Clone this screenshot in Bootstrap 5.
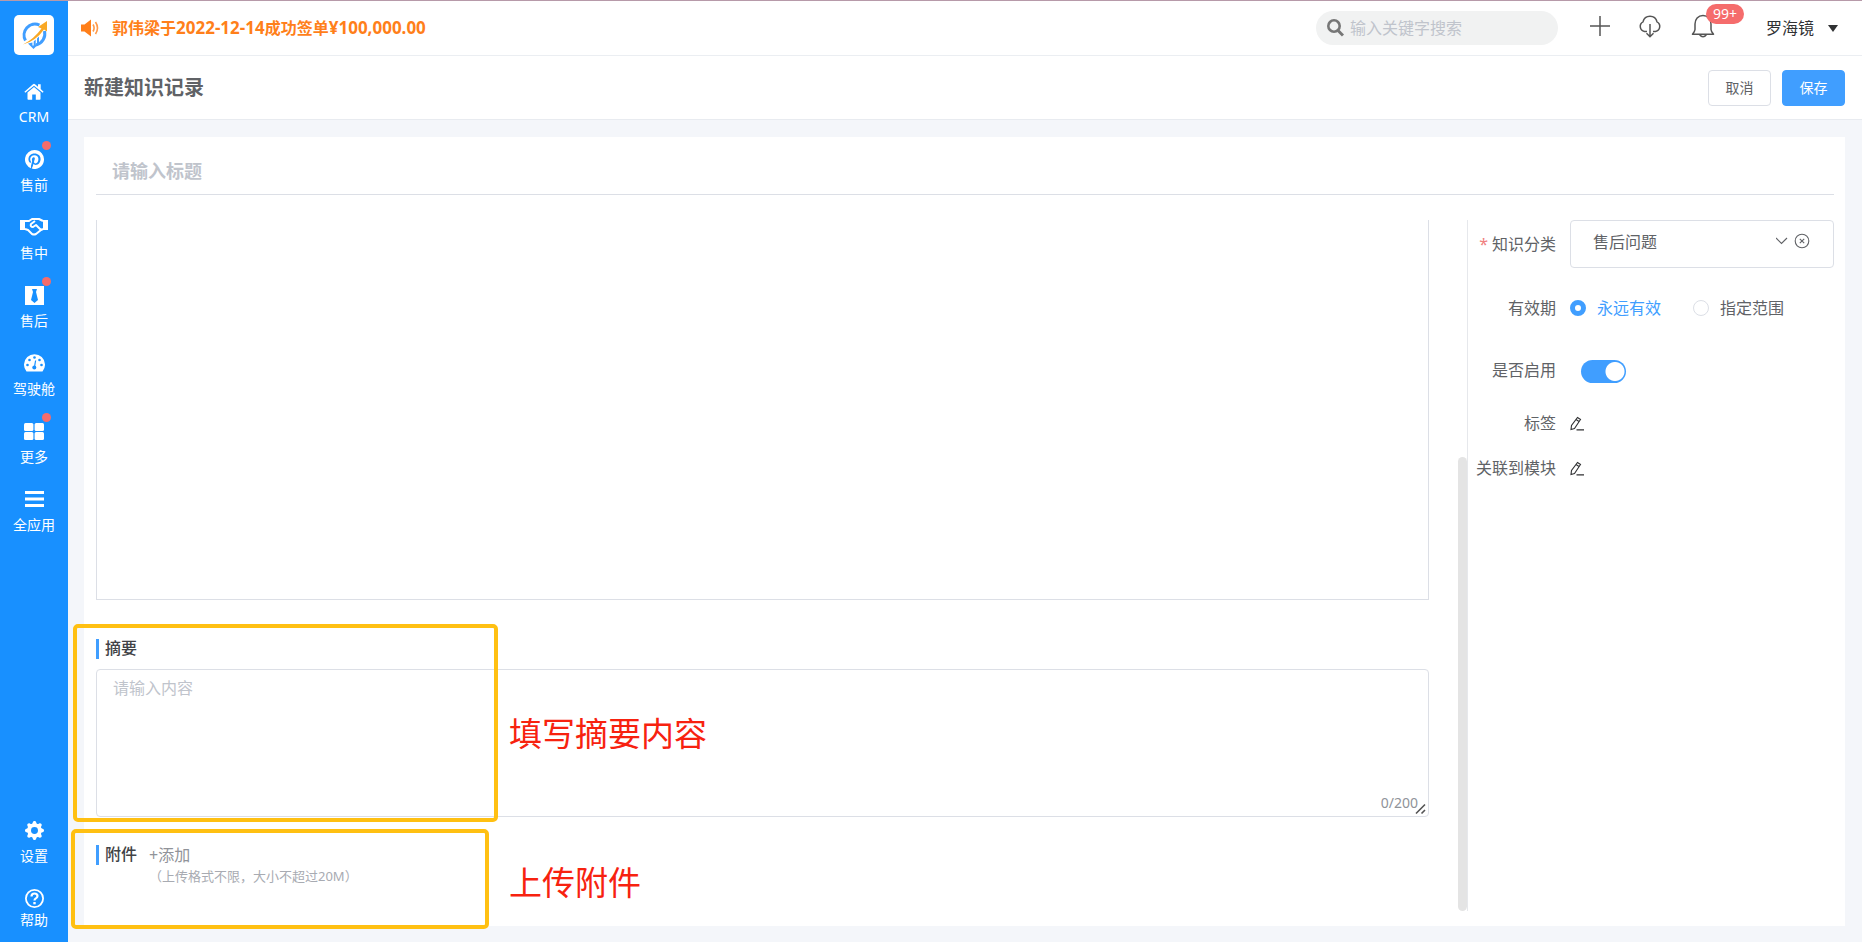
<!DOCTYPE html>
<html lang="zh-CN">
<head>
<meta charset="utf-8">
<meta name="viewport" content="width=device-width, initial-scale=1">
<title>新建知识记录</title>
<link rel="stylesheet" href="https://cdn.jsdelivr.net/npm/bootstrap@5.3.0/dist/css/bootstrap.min.css">
<style>
  body { font-family: "Noto Sans", "Noto Sans CJK SC", sans-serif; font-size: 16px; line-height: 24px; color: #606266; background: #f4f6fa; }
  svg { display: block; flex: none; }
  .top-line { height: 1px; background: #b79aa9; }
  .side { width: 68px; background: #1890ff; flex: none; }
  .logo { width: 40px; height: 40px; border-radius: 5px; background: #fff; margin: 14px auto 20px; }
  .side-link { height: 68px; padding-top: 4px; color: #fff; text-decoration: none; font-size: 14px; line-height: 20px; gap: 4px; }
  .side-link .glyph { height: 24px; }
  .side-link:hover { color: #fff; }
  .dot { position: absolute; width: 9px; height: 9px; border-radius: 50%; background: #f56c6c; top: -2px; left: 42px; }
  .side-link.help-link { height: 60px; gap: 0; }
  .topbar { height: 55px; border-bottom: 1px solid #ebeef2; background: #fff; padding: 0 24px 0 12px; }
  .notice { color: #ff7f1a; font-weight: 600; gap: 12px; }
  .notice b { font-size: 17px; font-weight: 700; }
  .search { width: 242px; height: 34px; border-radius: 17px; background: #f1f2f2; padding: 0 11px; gap: 6px; margin-right: 32px; }
  .search input { border: 0; background: none; outline: 0; padding: 0; min-width: 0; height: 24px; }
  input::placeholder, textarea::placeholder { color: #c0c4cc !important; opacity: 1; }
  .icon-btn { border: 0; background: none; padding: 0; }
  .tools { gap: 28px; margin-right: 50px; padding-bottom: 4px; }
  .count { position: absolute; left: 16px; top: -10px; height: 20px; border-radius: 10px; background: #f56c6c; color: #fff; font-size: 14px; line-height: 20px; padding: 0 7px; }
  .user { color: #303133; gap: 14px; }
  .titlebar { height: 64px; border-bottom: 1px solid #e8ebf0; background: #fff; padding: 0 17px 0 16px; gap: 11px; }
  .titlebar h1 { font-size: 20px; line-height: 28px; font-weight: 700; color: #606266; }
  .act { width: 63px; height: 36px; padding: 0; font-size: 14px; line-height: 20px; border-radius: 4px; }
  .act-plain { border: 1px solid #dcdfe6; color: #606266; background: #fff; }
  .act-main, .act-main:hover { background: #409eff; border-color: #409eff; color: #fff; }
  .sheet { background: #fff; margin: 17px 17px 16px 16px; padding: 0 11px 15px 12px; }
  .title-input { height: 58px; border: 0; border-bottom: 1px solid #dcdfe6; border-radius: 0; font-size: 18px; font-weight: 700; padding: 16px 16px 6px; outline: 0; background: none; }
  .work { margin-top: 25px; }
  .left-col { padding-right: 38px; border-right: 1px solid #e6e8ec; }
  .editor { height: 380px; border: 1px solid #dcdfe6; border-top: 0; outline: 0; }
  .thumb { position: absolute; right: 0; bottom: 0; width: 9px; height: 454px; border-radius: 5px; background: #e4e4e4; }
  .sec-title { font-size: 16px; line-height: 18px; padding-bottom: 2px; font-weight: 500; color: #404246; border-left: 3px solid #409eff; padding-left: 6px; }
  .sum-sec { margin-top: 39px; }
  .summary { height: 148px; border: 1px solid #dcdfe6; border-radius: 4px; padding: 6px 16px; outline: 0; resize: vertical; display: block; margin-top: 10px; }
  .summary::-webkit-resizer { background: none; }
  .counter { position: absolute; right: 11px; bottom: 2px; font-size: 14px; color: #909399; }
  .grip { position: absolute; right: 2px; bottom: 2px; pointer-events: none; }
  .att-sec { margin-top: 28px; min-height: 66px; }
  .add-btn { border: 0; background: none; padding: 0; color: #909399; line-height: 20px; }
  .hint { font-size: 13px; line-height: 20px; color: #a8abb2; margin: 1px 0 0 53px; }
  .frame { position: absolute; border: 4px solid #ffc012; border-radius: 5px; pointer-events: none; }
  .frame-sum { left: -23px; top: -15px; width: 425px; height: 198px; }
  .frame-att { left: -25px; top: -16px; width: 418px; height: 100px; }
  .callout { position: absolute; left: 413px; font-size: 33px; line-height: 40px; color: #f7220f; white-space: nowrap; pointer-events: none; }
  .callout-sum { top: 75px; }
  .callout-att { top: 18px; }
  .props { width: 366px; flex: none; }
  .prop-label { width: 88px; flex: none; text-align: right; }
  .req { color: #f08080; margin-right: 4px; }
  .prop-row { gap: 14px; }
  .row-valid { margin-top: 28px; }
  .row-on { margin-top: 37px; }
  .row-tag { margin-top: 28px; }
  .row-mod { margin-top: 21px; }
  .opts { gap: 11px; }
  .pick { height: 48px; border: 1px solid #dcdfe6; border-radius: 4px; }
  .pick select { appearance: none; border: 0; background: none; color: #606266; outline: 0; width: 100%; height: 42px; padding: 0 72px 0 22px; }
  .pick svg { position: absolute; right: 23px; top: 12px; pointer-events: none; }
  .rd { appearance: none; width: 16px; height: 16px; border: 1px solid #dcdfe6; border-radius: 50%; margin: 0; background: #fff; }
  .rd:checked { border: 5px solid #409eff; }
  .rd:checked + label { color: #409eff; margin-right: 21px; }
  .sw { appearance: none; width: 45px; height: 23px; border-radius: 12px; margin: 3px 0 0 11px; background: radial-gradient(circle at 34px 50%, #fff 9px, #409eff 10px); }
</style>
</head>
<body>
<div class="d-flex flex-column min-vh-100">
<div class="top-line"></div>
<div class="d-flex flex-fill">
  <aside class="side d-flex flex-column">
    <div class="logo d-flex align-items-center justify-content-center">
      <svg width="30" height="30" viewBox="0 0 30 30" fill="none">
        <path d="M20.500 5A11 11 0 0 0 6.500 20.500" stroke="#409eff" stroke-width="3"/>
        <path d="M25.500 11A11.500 11.500 0 0 1 17 25" stroke="#409eff" stroke-width="3"/>
        <path d="M9 23.500l5.500 5.500 5.500-5.500v-7l-2 2v6h-1.300v-5l-2 2v4h-1.300v-3z" fill="#409eff"/>
        <path d="M4 24.500Q15 19 22.500 8.500l-3.500-1.500 9-6v10.500l-3-2Q17 21 4 24.500z" fill="#f9a825"/>
      </svg>
    </div>
    <nav class="d-flex flex-column">
      <a href="#" class="side-link d-flex flex-column align-items-center">
        <span class="glyph d-flex align-items-center"><svg width="20" height="17" viewBox="0 0 20 17" fill="#fff"><path d="M10 4l6.500 5.400V16q0 .8-.8.8H11.800V11.500H8.200v5.300H4.300q-.8 0-.8-.8V9.400z"/><path d="M.4 8.700L9 1.200q1-.8 2 0l3 2.500V1.200h2.700V6l2.900 2.700-.9 1.100L10 2.700 1.300 9.800z"/></svg></span>
        <span>CRM</span></a>
      <a href="#" class="side-link d-flex flex-column align-items-center position-relative"><i class="dot"></i>
        <span class="glyph d-flex align-items-center"><svg width="19" height="19" viewBox="0 0 16 16" fill="#fff"><path d="M8 0a8 8 0 0 0-2.915 15.452c-.07-.633-.134-1.606.027-2.297.146-.625.938-3.977.938-3.977s-.239-.479-.239-1.187c0-1.113.645-1.943 1.448-1.943.682 0 1.012.512 1.012 1.127 0 .686-.437 1.712-.663 2.663-.188.796.4 1.446 1.185 1.446 1.422 0 2.515-1.500 2.515-3.664 0-1.915-1.377-3.254-3.342-3.254-2.276 0-3.612 1.707-3.612 3.471 0 .688.265 1.425.595 1.826a.24.24 0 0 1 .056.230c-.061.252-.196.796-.222.907-.035.146-.116.177-.268.107-1-.465-1.624-1.926-1.624-3.100 0-2.523 1.834-4.840 5.286-4.840 2.775 0 4.932 1.977 4.932 4.620 0 2.757-1.739 4.976-4.151 4.976-.811 0-1.573-.421-1.834-.919l-.498 1.902c-.181.695-.669 1.566-.995 2.097A8 8 0 1 0 8 0z"/></svg></span>
        <span>售前</span></a>
      <a href="#" class="side-link d-flex flex-column align-items-center">
        <span class="glyph d-flex align-items-center"><svg width="28" height="18" viewBox="0 0 28 18" fill="none" stroke="#fff" stroke-width="2" stroke-linejoin="round"><path d="M0 2h5v10H0zM23 2h5v10h-5z" fill="#fff" stroke="none"/><path d="M5 3h4l3-2h7l4 2M5 11l3 1 4 4q2 1 4 0l5-4 2-1M15 3l-4 3q-1 3 2 3l3-2 5 5"/></svg></span>
        <span>售中</span></a>
      <a href="#" class="side-link d-flex flex-column align-items-center position-relative"><i class="dot"></i>
        <span class="glyph d-flex align-items-center"><svg width="19" height="19" viewBox="0 0 19 19"><path d="M0 0h19v19H0z" fill="#fff"/><path d="M7 3h5l-1 3 2 8-3.500 3L6 14l2-8z" fill="#1890ff"/></svg></span>
        <span>售后</span></a>
      <a href="#" class="side-link d-flex flex-column align-items-center">
        <span class="glyph d-flex align-items-center"><svg width="21" height="18" viewBox="0 0 21 18"><path d="M2.500 17.500A10.500 10.500 0 1 1 18.500 17.500z" fill="#fff"/><g fill="#1890ff"><circle cx="3.500" cy="11" r="1.300"/><circle cx="5.500" cy="6" r="1.300"/><circle cx="10.500" cy="3.500" r="1.300"/><circle cx="15.500" cy="6" r="1.300"/><circle cx="17.500" cy="11" r="1.300"/><circle cx="10.300" cy="13.500" r="2"/><path d="M11 6.500h1.200L11 13.500H9.800z"/></g></svg></span>
        <span>驾驶舱</span></a>
      <a href="#" class="side-link d-flex flex-column align-items-center position-relative"><i class="dot"></i>
        <span class="glyph d-flex align-items-center"><svg width="20" height="17" viewBox="0 0 20 17" fill="#fff"><rect width="9.400" height="8" rx="1.500"/><rect x="10.600" width="9.400" height="8" rx="1.500"/><rect y="9" width="9.400" height="8" rx="1.500"/><rect x="10.600" y="9" width="9.400" height="8" rx="1.500"/></svg></span>
        <span>更多</span></a>
      <a href="#" class="side-link d-flex flex-column align-items-center">
        <span class="glyph d-flex align-items-center"><svg width="19" height="16" viewBox="0 0 19 16" fill="#fff"><path d="M0 0h19v3H0zM0 6.500h19v3H0zM0 13h19v3H0z"/></svg></span>
        <span>全应用</span></a>
    </nav>
    <nav class="mt-auto d-flex flex-column">
      <a href="#" class="side-link d-flex flex-column align-items-center">
        <span class="glyph d-flex align-items-center"><svg width="19" height="19" viewBox="0 0 16 16" fill="#fff"><path d="M9.405 1.050c-.413-1.400-2.397-1.400-2.810 0l-.1.340a1.464 1.464 0 0 1-2.105.872l-.31-.17c-1.283-.698-2.686.705-1.987 1.987l.169.311c.446.820.023 1.841-.872 2.105l-.34.1c-1.400.413-1.400 2.397 0 2.810l.34.1a1.464 1.464 0 0 1 .872 2.105l-.17.310c-.698 1.283.705 2.686 1.987 1.987l.311-.169a1.464 1.464 0 0 1 2.105.872l.1.340c.413 1.400 2.397 1.400 2.810 0l.1-.34a1.464 1.464 0 0 1 2.105-.872l.31.170c1.283.698 2.686-.705 1.987-1.987l-.169-.311a1.464 1.464 0 0 1 .872-2.105l.34-.1c1.400-.413 1.400-2.397 0-2.810l-.34-.1a1.464 1.464 0 0 1-.872-2.105l.17-.31c.698-1.283-.705-2.686-1.987-1.987l-.311.169a1.464 1.464 0 0 1-2.105-.872zM8 10.930a2.929 2.929 0 1 1 0-5.860 2.929 2.929 0 0 1 0 5.860z"/></svg></span>
        <span>设置</span></a>
      <a href="#" class="side-link help-link d-flex flex-column align-items-center">
        <span class="glyph d-flex align-items-center"><svg width="19" height="19" viewBox="0 0 19 19" fill="none" stroke="#fff"><circle cx="9.500" cy="9.500" r="8.600" stroke-width="1.800"/><path d="M6.500 7.500q0-3 3-3t3 2.600q0 1.400-1.600 2.300-1.400.8-1.400 2.200" stroke-width="2.200"/><path d="M9.500 13v2.300" stroke-width="2.400"/></svg></span>
        <span>帮助</span></a>
    </nav>
  </aside>

  <div class="flex-fill d-flex flex-column">
    <header class="topbar d-flex align-items-center">
      <div class="notice d-flex align-items-center">
        <svg width="20" height="18" viewBox="0 0 20 18"><path d="M1 5.500h3.500L11 .5v17L4.500 12.500H1z" fill="#ff7f1a"/><path d="M13 5.500q2.200 3.500 0 7M15.500 3q4 6 0 12" fill="none" stroke="#ff7f1a" stroke-width="1.600" opacity=".8"/></svg>
        <span>郭伟梁于<b>2022-12-14</b>成功签单<b>¥100,000.00</b></span>
      </div>
      <label class="search d-flex align-items-center ms-auto">
        <svg width="17" height="18" viewBox="0 0 17 18" fill="none" stroke="#777"><circle cx="7" cy="7" r="5.700" stroke-width="2.600"/><path d="M11 11.500l5 5" stroke-width="3"/></svg>
        <input type="search" class="flex-fill" placeholder="输入关键字搜索" aria-label="搜索">
      </label>
      <div class="tools d-flex align-items-center">
        <button class="icon-btn" aria-label="新建"><svg width="20" height="20" viewBox="0 0 20 20" stroke="#555" stroke-width="1.500"><path d="M10 0v20M0 10h20"/></svg></button>
        <button class="icon-btn" aria-label="下载"><svg width="24" height="24" viewBox="0 0 24 24" fill="none" stroke="#555" stroke-width="1.500"><path d="M9 17.500H6.500A5.200 5.200 0 0 1 5 7.800a7.200 7.200 0 0 1 14 0A5.200 5.200 0 0 1 17.500 17.500H15M12 10v12.500M8.500 19.300L12 22.700l3.500-3.400"/></svg></button>
        <button class="icon-btn position-relative" aria-label="通知"><svg width="26" height="24" viewBox="0 0 26 24" fill="none" stroke="#555" stroke-width="1.500" stroke-linejoin="round"><path d="M13 1.500C8 1.500 5 5.500 5 10v5.500q0 1.500-2.500 4.800h21q-2.500-3.300-2.500-4.800V10c0-4.500-3-8.500-8-8.500zM9.500 20.500q3.500 4.500 7 0"/></svg><span class="count">99+</span></button>
      </div>
      <button class="icon-btn user d-flex align-items-center"><span>罗海镜</span><svg width="10" height="7" viewBox="0 0 10 7"><path d="M0 0h10L5 7z" fill="#303133"/></svg></button>
    </header>
    <div class="titlebar d-flex align-items-center">
      <h1 class="m-0 me-auto">新建知识记录</h1>
      <button class="btn act act-plain">取消</button>
      <button class="btn act act-main">保存</button>
    </div>
    <main class="sheet flex-fill d-flex flex-column">
      <input class="title-input w-100" type="text" placeholder="请输入标题" aria-label="标题">
      <div class="work d-flex flex-fill">
        <div class="left-col flex-fill position-relative">
          <div class="editor" contenteditable="true" role="textbox" aria-label="正文"></div>
          <section class="sum-sec position-relative">
            <label class="sec-title d-block" for="summary">摘要</label>
            <div class="position-relative">
              <textarea id="summary" class="summary w-100" placeholder="请输入内容"></textarea>
              <span class="counter">0/200</span>
              <svg class="grip" width="12" height="12" viewBox="0 0 12 12" stroke="#555" stroke-width="1.600"><path d="M1 10.500L10 1.500M6.500 10.500L10 7"/></svg>
            </div>
            <div class="frame frame-sum"></div>
            <div class="callout callout-sum">填写摘要内容</div>
          </section>
          <section class="att-sec position-relative">
            <div class="d-flex align-items-center">
              <div class="sec-title">附件</div>
              <button class="add-btn ms-2 ps-1">+添加</button>
            </div>
            <p class="hint">（上传格式不限，大小不超过20M）</p>
            <div class="frame frame-att"></div>
            <div class="callout callout-att">上传附件</div>
          </section>
          <div class="thumb"></div>
        </div>
        <form class="props">
          <div class="prop-row d-flex align-items-center">
            <label class="prop-label" for="cat"><span class="req">*</span>知识分类</label>
            <div class="pick position-relative flex-fill">
              <select id="cat"><option>售后问题</option></select>
              <svg width="34" height="16" viewBox="0 0 34 16" fill="none" stroke="#606266" stroke-width="1.100"><path d="M0 5l5.500 5.500L11 5"/><circle cx="26" cy="8" r="6.800"/><path d="M23.800 5.800l4.400 4.400M28.200 5.800l-4.400 4.400"/></svg>
            </div>
          </div>
          <div class="prop-row row-valid d-flex align-items-center" role="radiogroup" aria-label="有效期">
            <span class="prop-label">有效期</span>
            <div class="opts d-flex align-items-center">
              <input class="rd" type="radio" name="valid" id="v1" checked><label for="v1">永远有效</label>
              <input class="rd" type="radio" name="valid" id="v2"><label for="v2">指定范围</label>
            </div>
          </div>
          <div class="prop-row row-on d-flex align-items-center">
            <label class="prop-label" for="on">是否启用</label>
            <input class="sw" type="checkbox" role="switch" id="on" checked>
          </div>
          <div class="prop-row row-tag d-flex align-items-center">
            <span class="prop-label">标签</span>
            <button type="button" class="icon-btn" aria-label="编辑标签"><svg width="14" height="15" viewBox="0 0 14 15" fill="none" stroke="#303133" stroke-width="1.100"><path d="M7.500 1.500l3 2-6 9-3.500 1 .5-4zM6 3.500l3 2M6.500 13.900H14"/></svg></button>
          </div>
          <div class="prop-row row-mod d-flex align-items-center">
            <span class="prop-label">关联到模块</span>
            <button type="button" class="icon-btn" aria-label="编辑关联模块"><svg width="14" height="15" viewBox="0 0 14 15" fill="none" stroke="#303133" stroke-width="1.100"><path d="M7.500 1.500l3 2-6 9-3.500 1 .5-4zM6 3.500l3 2M6.500 13.900H14"/></svg></button>
          </div>
        </form>
      </div>
    </main>
  </div>
</div>
</div>
<script src="https://cdn.jsdelivr.net/npm/bootstrap@5.3.0/dist/js/bootstrap.bundle.min.js"></script>
</body>
</html>
